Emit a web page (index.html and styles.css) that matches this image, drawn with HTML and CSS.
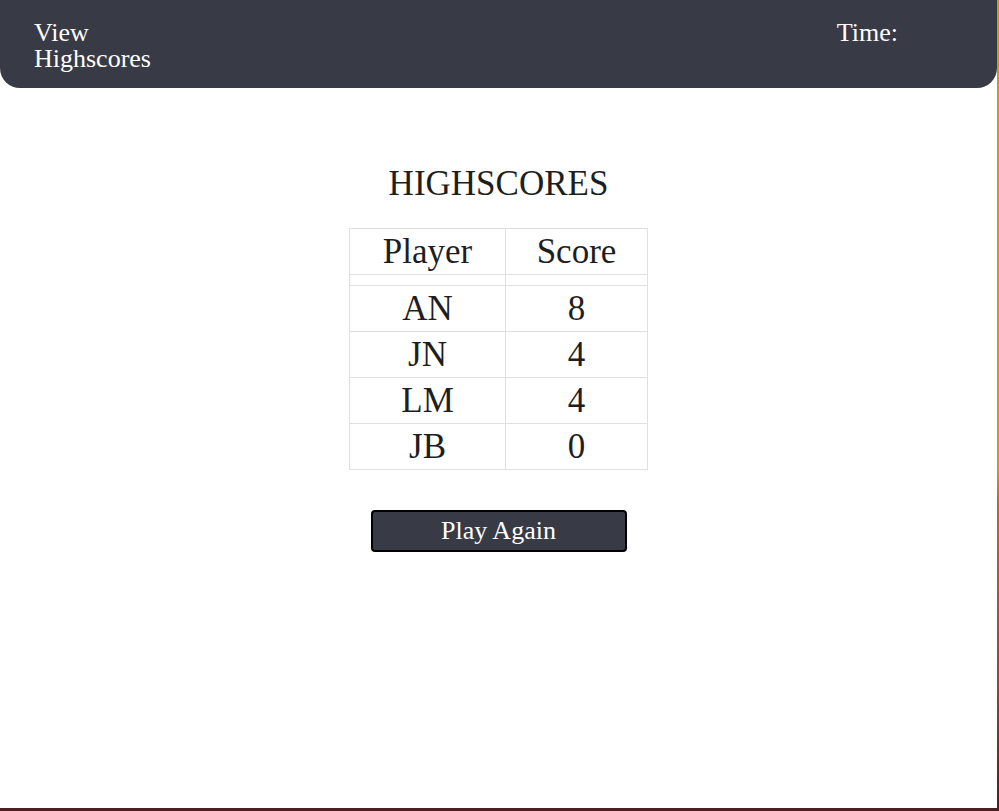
FILE: index.html
```html
<!DOCTYPE html>
<html lang="en">
<head>
<meta charset="utf-8">
<title>Highscores</title>
<link rel="stylesheet" href="styles.css">
</head>
<body>
<div class="page">
  <header class="topbar">
    <a class="view-link" href="#">View<br>Highscores</a>
    <div class="timer">Time:</div>
  </header>
  <main class="content">
    <h1 class="title">HIGHSCORES</h1>
    <table class="scores">
      <thead>
        <tr><th class="col-player">Player</th><th class="col-score">Score</th></tr>
        <tr class="spacer"><td></td><td></td></tr>
      </thead>
      <tbody>
        <tr><td>AN</td><td>8</td></tr>
        <tr><td>JN</td><td>4</td></tr>
        <tr><td>LM</td><td>4</td></tr>
        <tr><td>JB</td><td>0</td></tr>
      </tbody>
    </table>
    <button class="play-btn" type="button">Play Again</button>
  </main>
</div>
</body>
</html>
```
FILE: styles.css
```css
html {
  margin: 0;
  background: linear-gradient(to bottom, #c9962a 0%, #c9962a 58%, #b36a34 62%, #8a4a2a 85%, #4a1e20 100%);
  height: 100%;
}
body {
  margin: 0;
  font-family: "Liberation Serif", "Times New Roman", serif;
  color: #1e1e1e;
  height: 100%;
}
.page {
  width: 997px;
  height: 808px;
  background: #fff;
  display: flex;
  flex-direction: column;
}
.topbar {
  height: 88px;
  box-sizing: border-box;
  background: #383a46;
  border-radius: 0 0 20px 20px;
  display: flex;
  justify-content: space-between;
  align-items: flex-start;
  padding: 20px 99px 0 34px;
}
.view-link {
  color: #fff;
  text-decoration: none;
  font-size: 26px;
  line-height: 26px;
}
.timer {
  color: #fff;
  font-size: 26px;
  line-height: 26px;
}
.content {
  display: flex;
  flex-direction: column;
  align-items: center;
}
.title {
  margin: 76px 0 0;
  font-weight: normal;
  font-size: 35px;
  line-height: 40px;
}
.scores {
  margin-top: 24px;
  border-collapse: collapse;
  font-size: 35px;
}
.scores th, .scores td {
  border: 1px solid #e0e0e0;
  text-align: center;
  font-weight: normal;
  height: 45px;
  padding: 0;
  line-height: 40px;
}
.scores .col-player { width: 155px; }
.scores .col-score { width: 141px; }
.scores .spacer td { height: 10px; line-height: 0; }
.play-btn {
  margin-top: 40px;
  width: 256px;
  height: 42px;
  background: #383a46;
  color: #fff;
  border: 2px solid #000;
  border-radius: 4px;
  font-family: "Liberation Serif", "Times New Roman", serif;
  font-size: 26px;
  line-height: 1;
  padding: 0;
}
```
